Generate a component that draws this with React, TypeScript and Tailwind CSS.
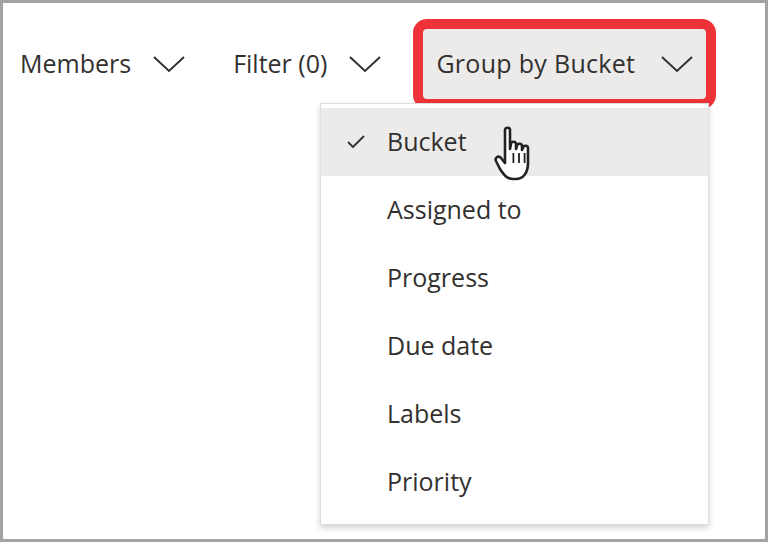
import React from "react";

const Chev = () => (
  <svg width="32" height="18" viewBox="0 0 32 18" fill="none" stroke="#323130" strokeWidth="2">
    <path d="M1 2 L16 16 L31 2" />
  </svg>
);

export default function App() {
  const items = ["Bucket", "Assigned to", "Progress", "Due date", "Labels", "Priority"];
  return (
    <div className="w-[768px] h-[542px] bg-white border-[3px] border-[#a3a3a3] relative overflow-hidden text-[#323130]" style={{ fontFamily: '"Open Sans", sans-serif' }}>
      <div className="flex items-center h-[87px] mt-[17px] pl-[17px] text-[25px]">
        <div className="flex items-center gap-[22px]">
          <span>Members</span>
          <Chev />
        </div>
        <div className="flex items-center gap-[22px] ml-[48px]">
          <span>Filter (0)</span>
          <Chev />
        </div>
        <div className="ml-[32px] h-[90px] w-[303px] rounded-[14px] border-[10px] border-[#ee3338] bg-[#edebe9] flex items-center gap-[26px] pl-[13px]">
          <span className="tracking-[0.3px]">Group by Bucket</span>
          <Chev />
        </div>
      </div>
      <div className="absolute left-[317px] top-[100px] w-[389px] bg-white border border-[#e1dfdd] shadow-[0_3px_6px_rgba(0,0,0,0.18)] pt-[4px] pb-[8px]">
        {items.map((t, i) => (
          <div key={t} className={`h-[68px] flex items-center text-[25px] ${i === 0 ? "bg-[#edebe9]" : ""}`}>
            <span className="w-[66px] flex justify-center pl-[4px]">
              {i === 0 && (
                <svg width="18" height="14" viewBox="0 0 18 14" fill="none" stroke="#323130" strokeWidth="1.8">
                  <path d="M1 7 L6 12 L17 1" />
                </svg>
              )}
            </span>
            <span>{t}</span>
          </div>
        ))}
      </div>
      <svg className="absolute left-[490px] top-[122px]" width="44" height="60" viewBox="0 0 22 30">
        <path d="M6 2.5 C6 1 8.5 1 8.5 2.5 L8.5 12 L9 9.5 C9 8 11.5 8 11.5 9.5 L11.5 12 L12 10.5 C12 9 14.5 9 14.5 10.5 L14.5 12.5 L15 11.5 C15 10 17.5 10 17.5 11.5 L17.5 19 C17.5 24 15 27 11.5 27 L10 27 C7 27 5.5 25 3.5 22 L1.5 18 C0.8 16.5 2.5 15 4 16.5 L6 19 Z" fill="white" stroke="#222" strokeWidth="1.3" strokeLinejoin="round" />
        <path d="M10.2 14 L10.2 19 M13 14 L13 19 M15.8 14 L15.8 19" stroke="#222" strokeWidth="0.9" />
      </svg>
    </div>
  );
}
